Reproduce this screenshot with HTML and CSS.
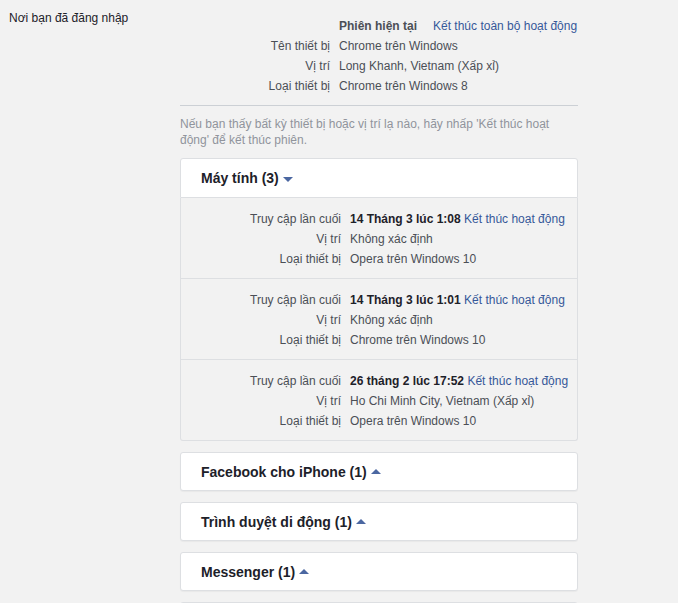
FILE: index.html
```html
<!DOCTYPE html>
<html lang="vi">
<head>
<meta charset="utf-8">
<link rel="stylesheet" href="styles.css">
</head>
<body>
<div class="page">
  <div class="side-title">Nơi bạn đã đăng nhập</div>
  <div class="content">
    <div class="current">
      <div class="info-row">
        <span class="info-label"></span>
        <span class="info-value"><b class="strong">Phiên hiện tại</b><a class="link end-all">Kết thúc toàn bộ hoạt động</a></span>
      </div>
      <div class="info-row">
        <span class="info-label">Tên thiết bị</span>
        <span class="info-value">Chrome trên Windows</span>
      </div>
      <div class="info-row">
        <span class="info-label">Vị trí</span>
        <span class="info-value">Long Khanh, Vietnam (Xấp xỉ)</span>
      </div>
      <div class="info-row">
        <span class="info-label">Loại thiết bị</span>
        <span class="info-value">Chrome trên Windows 8</span>
      </div>
    </div>
    <div class="note">Nếu bạn thấy bất kỳ thiết bị hoặc vị trí lạ nào, hãy nhấp 'Kết thúc hoạt động' để kết thúc phiên.</div>

    <div class="group">
      <div class="card open">
        <span class="card-title">Máy tính (3)</span><span class="caret down"></span>
      </div>
      <div class="sessions">
        <div class="session">
          <div class="s-row"><span class="s-label">Truy cập lần cuối</span><span class="s-value"><b class="strong">14 Tháng 3 lúc 1:08</b> <a class="link">Kết thúc hoạt động</a></span></div>
          <div class="s-row"><span class="s-label">Vị trí</span><span class="s-value">Không xác định</span></div>
          <div class="s-row"><span class="s-label">Loại thiết bị</span><span class="s-value">Opera trên Windows 10</span></div>
        </div>
        <div class="session">
          <div class="s-row"><span class="s-label">Truy cập lần cuối</span><span class="s-value"><b class="strong">14 Tháng 3 lúc 1:01</b> <a class="link">Kết thúc hoạt động</a></span></div>
          <div class="s-row"><span class="s-label">Vị trí</span><span class="s-value">Không xác định</span></div>
          <div class="s-row"><span class="s-label">Loại thiết bị</span><span class="s-value">Chrome trên Windows 10</span></div>
        </div>
        <div class="session">
          <div class="s-row"><span class="s-label">Truy cập lần cuối</span><span class="s-value"><b class="strong">26 tháng 2 lúc 17:52</b> <a class="link">Kết thúc hoạt động</a></span></div>
          <div class="s-row"><span class="s-label">Vị trí</span><span class="s-value">Ho Chi Minh City, Vietnam (Xấp xỉ)</span></div>
          <div class="s-row"><span class="s-label">Loại thiết bị</span><span class="s-value">Opera trên Windows 10</span></div>
        </div>
      </div>
    </div>

    <div class="card">
      <span class="card-title">Facebook cho iPhone (1)</span><span class="caret up"></span>
    </div>
    <div class="card">
      <span class="card-title">Trình duyệt di động (1)</span><span class="caret up"></span>
    </div>
    <div class="card">
      <span class="card-title">Messenger (1)</span><span class="caret up"></span>
    </div>
    <div class="card"></div>
  </div>
</div>
</body>
</html>
```

FILE: styles.css
```css
* { box-sizing: border-box; }

html, body {
  margin: 0;
  padding: 0;
  background: #f2f2f2;
}

body {
  font-family: "Liberation Sans", Arial, sans-serif;
  font-size: 12px;
  color: #1d2129;
  overflow: hidden;
}

.page {
  display: flex;
  align-items: flex-start;
}

.side-title {
  width: 180px;
  padding: 11px 0 0 9px;
  line-height: 14px;
  color: #1d2129;
}

.content {
  width: 398px;
  padding-top: 16px;
}

.current {
  padding-bottom: 9px;
  border-bottom: 1px solid #ccd0d5;
}

.info-row {
  display: flex;
  line-height: 20px;
  height: 20px;
}

.info-label {
  width: 150px;
  text-align: right;
  color: #4b4f56;
  flex-shrink: 0;
}

.info-value {
  margin-left: 9px;
  color: #4b4f56;
  white-space: nowrap;
}

.strong {
  font-weight: bold;
  color: #1d2129;
}

.info-value .strong {
  color: #4b4f56;
}

.link {
  color: #365899;
  text-decoration: none;
}

.end-all {
  margin-left: 16px;
}

.note {
  margin-top: 10px;
  line-height: 16px;
  color: #90949c;
  padding-right: 10px;
}

.group {
  margin-top: 10px;
}

.card {
  display: flex;
  align-items: center;
  height: 39px;
  padding-left: 20px;
  padding-top: 1px;
  background: #fff;
  border: 1px solid #dddfe2;
  border-radius: 3px;
  margin-top: 11px;
  box-shadow: 0 1px 1px rgba(0, 0, 0, 0.04);
}

.group .card {
  height: 40px;
  padding-top: 0;
  margin-top: 0;
  border-radius: 3px 3px 0 0;
  box-shadow: none;
}

.card-title {
  font-size: 14px;
  font-weight: bold;
  color: #1d2129;
}

.caret {
  width: 0;
  height: 0;
  margin-left: 4px;
  border-left: 5px solid transparent;
  border-right: 5px solid transparent;
}

.caret.down {
  border-top: 5px solid #4b67a1;
  margin-top: 2px;
}

.caret.up {
  border-bottom: 5px solid #4b67a1;
  margin-top: -1px;
}

.sessions {
  border: 1px solid #dddfe2;
  border-top: none;
  border-radius: 0 0 3px 3px;
  background: #f2f2f2;
}

.session {
  padding: 11px 0 9px;
  border-top: 1px solid #dddfe2;
}

.session:first-child {
  border-top: none;
}

.s-row {
  display: flex;
  line-height: 20px;
  height: 20px;
}

.s-label {
  width: 160px;
  flex-shrink: 0;
  text-align: right;
  color: #4b4f56;
}

.s-value {
  margin-left: 9px;
  color: #4b4f56;
  white-space: nowrap;
}

.s-value .strong {
  color: #1d2129;
}
```
